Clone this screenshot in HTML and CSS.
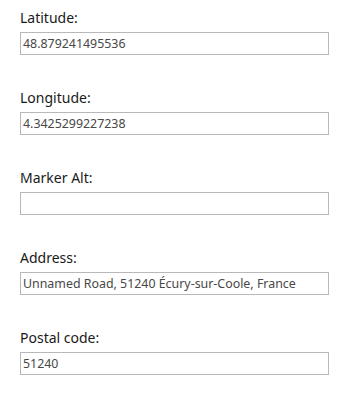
FILE: index.html
```html
<!DOCTYPE html>
<html lang="en">
<head>
    <meta charset="UTF-8">
    <title>Marker details</title>
    <meta name="viewport" content="width=device-width, initial-scale=1">
    <link rel="stylesheet" href="styles.css">
</head>
<body>
    <div class="container">
        <div class="form-group">
            <label for="lat">Latitude:</label>
            <input type="text" id="lat" value="48.879241495536">
        </div>
        <div class="form-group">
            <label for="lng">Longitude:</label>
            <input type="text" id="lng" value="4.3425299227238">
        </div>
        <div class="form-group">
            <label for="alt">Marker Alt:</label>
            <input type="text" id="alt" value="">
        </div>
        <div class="form-group">
            <label for="address">Address:</label>
            <input type="text" id="address" value="Unnamed Road, 51240 Écury-sur-Coole, France">
        </div>
        <div class="form-group">
            <label for="postal">Postal code:</label>
            <input type="text" id="postal" value="51240">
        </div>
    </div>
</body>
</html>
```

FILE: styles.css
```css
body {
    font-family: 'Noto Sans', sans-serif;
    margin: 0;
    padding: 8px 17px 0 20px;
    background: #fff;
}
.container {
    display: flex;
    flex-direction: column;
}
.form-group {
    display: flex;
    flex-direction: column;
    margin-bottom: 33px;
}
.form-group label {
    font-size: 14px;
    line-height: 20px;
    color: #1a1a1a;
    margin-bottom: 4px;
}
.form-group input {
    box-sizing: border-box;
    width: 100%;
    height: 23px;
    margin: 0;
    padding: 0 2px;
    border: 1px solid #b8b8b8;
    border-radius: 0;
    font-family: 'Noto Sans', sans-serif;
    font-size: 12.4px;
    color: #484848;
    background: #fff;
    outline: none;
}
```
